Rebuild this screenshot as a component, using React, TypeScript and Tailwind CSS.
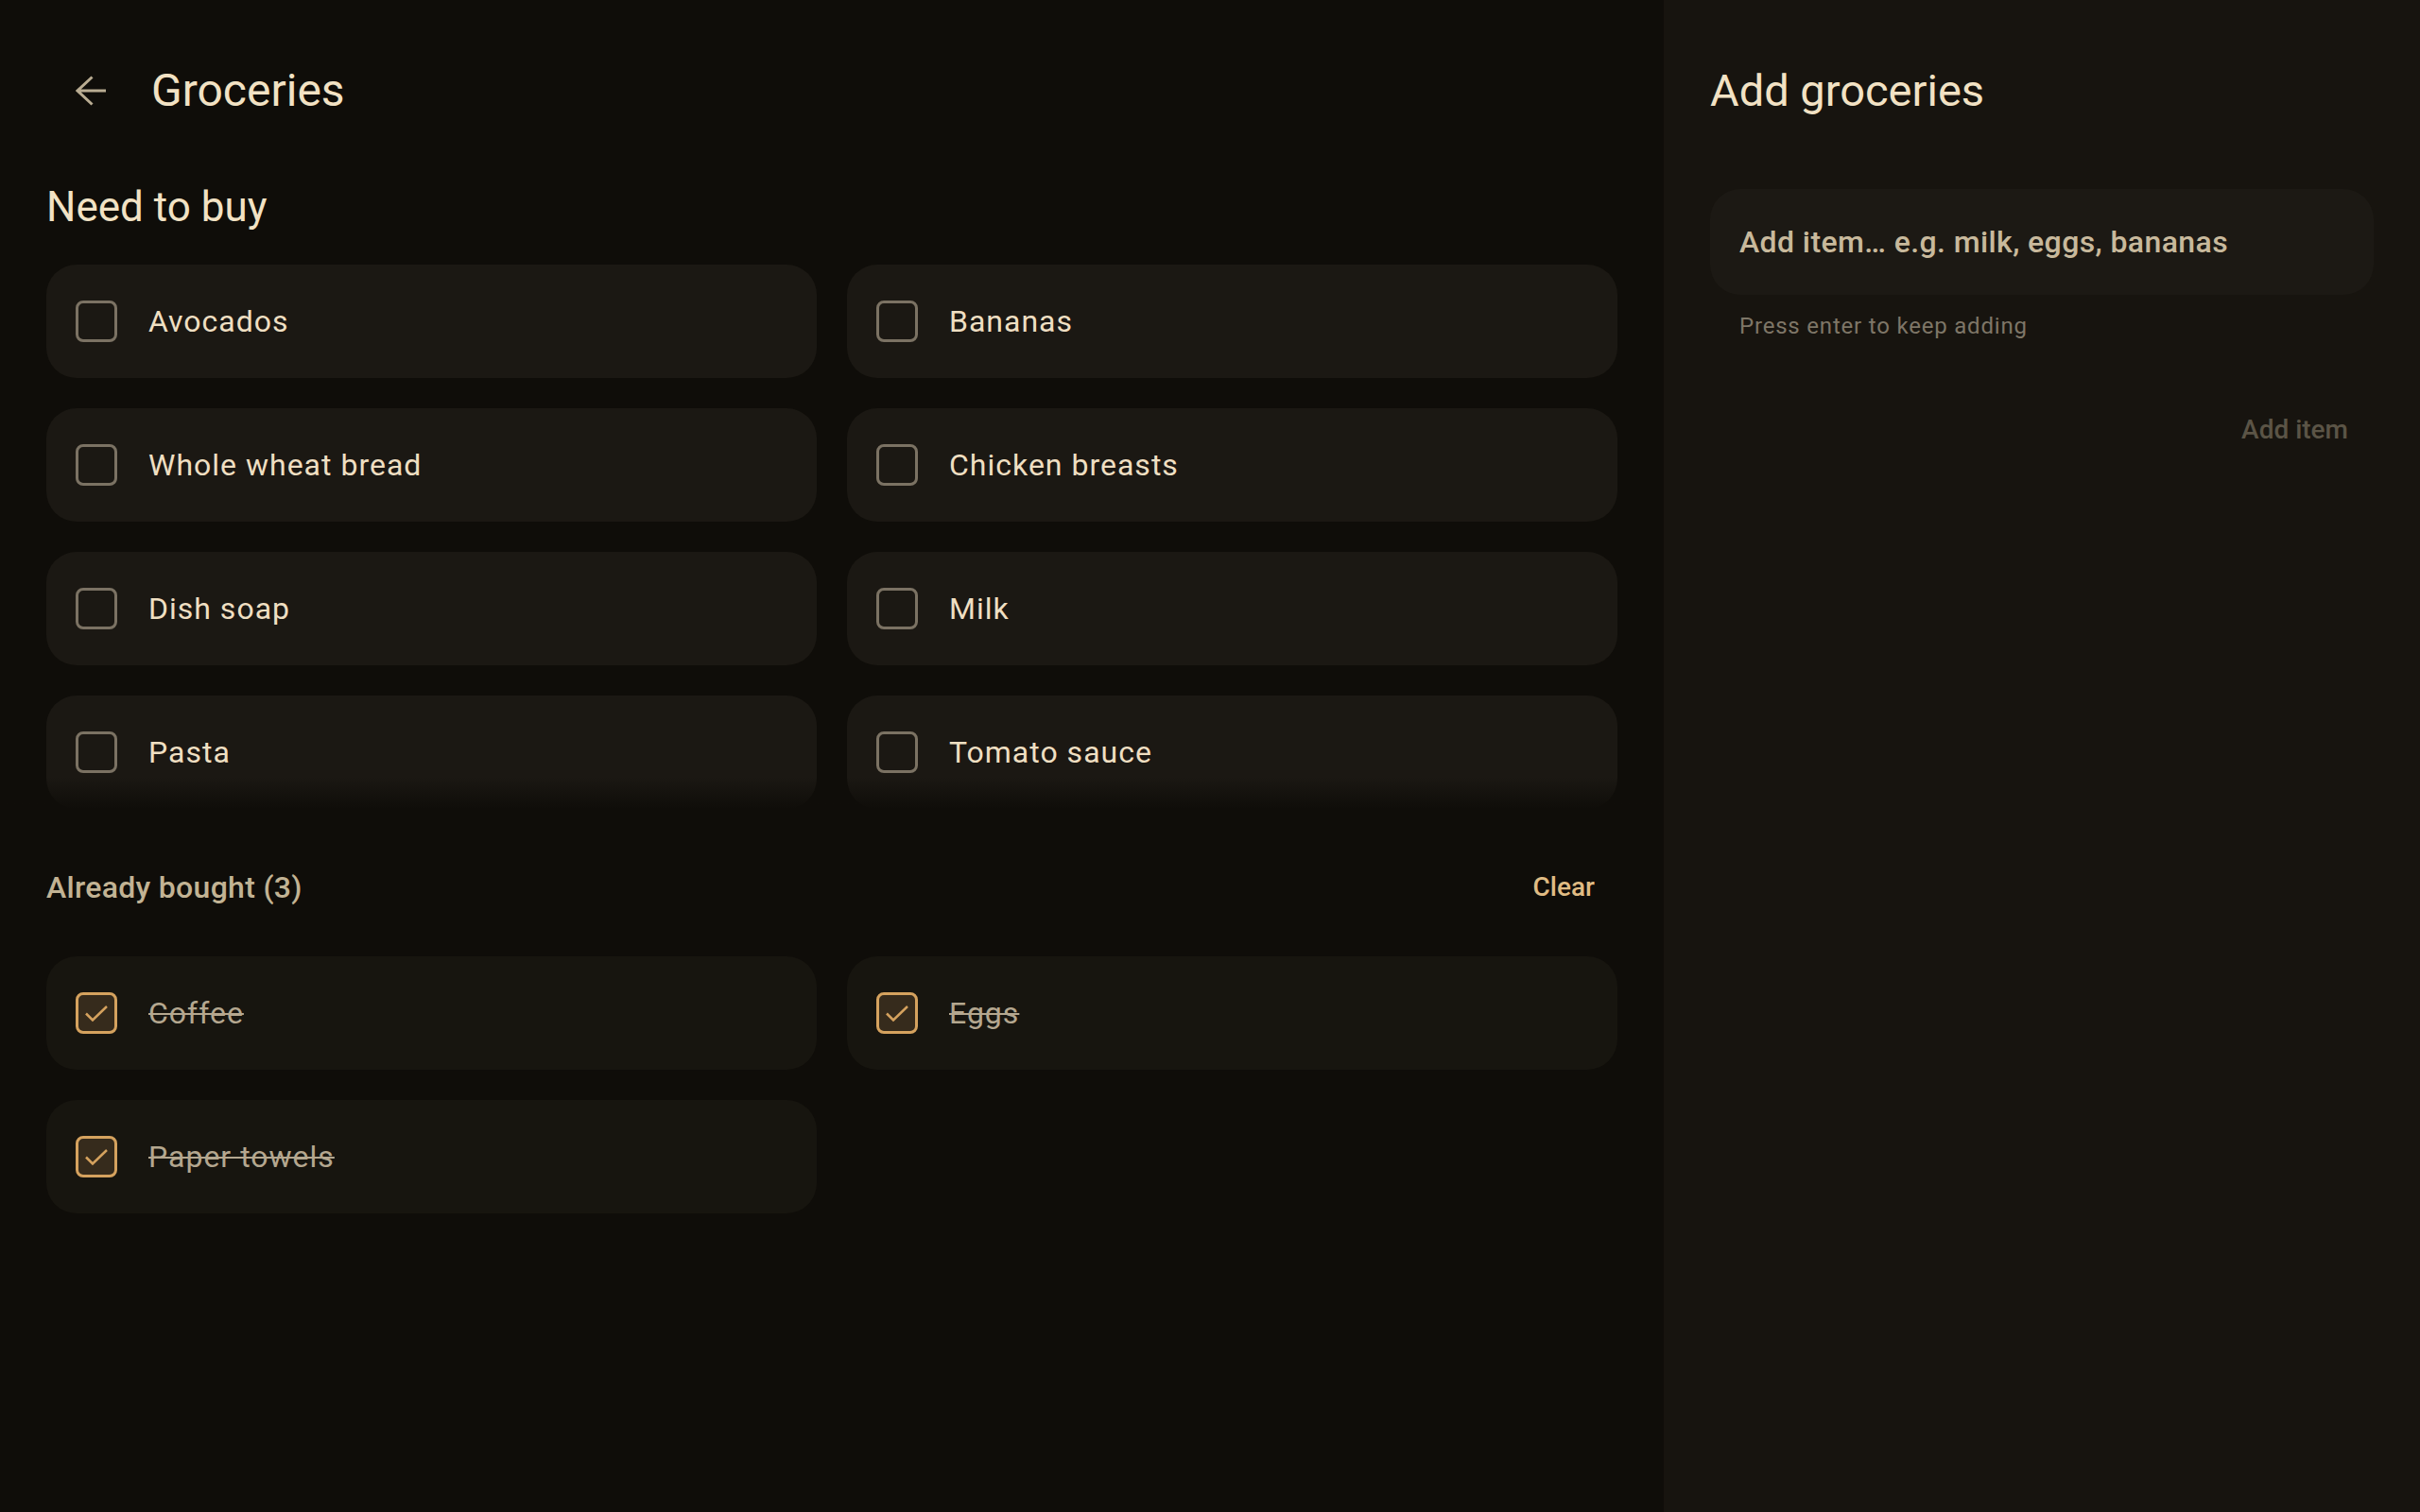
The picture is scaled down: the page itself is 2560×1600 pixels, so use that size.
const toBuy = [
  "Avocados",
  "Bananas",
  "Whole wheat bread",
  "Chicken breasts",
  "Dish soap",
  "Milk",
  "Pasta",
  "Tomato sauce",
];

const bought = ["Coffee", "Eggs", "Paper towels"];

function BackArrow() {
  return (
    <svg width="32" height="32" viewBox="0 0 32 32" fill="none">
      <path d="M2 16H32M17.5 1.5 2 16l15.5 14.5" stroke="#b9ac92" strokeWidth="3" />
    </svg>
  );
}

function Box({ checked }: { checked?: boolean }) {
  if (checked) {
    return (
      <div className="size-[44px] shrink-0 rounded-[8px] border-[3px] border-[#d5a25e] bg-[#362b1c] flex items-center justify-center">
        <svg width="44" height="44" viewBox="0 0 44 44" fill="none" className="-m-[3px]">
          <path d="M11 22.5 18 29.5 33 15" stroke="#d5a25e" strokeWidth="2.5" />
        </svg>
      </div>
    );
  }
  return <div className="size-[44px] shrink-0 rounded-[8px] border-[3px] border-[#7b7263]" />;
}

function Item({ name, done }: { name: string; done?: boolean }) {
  return (
    <div
      className={
        "h-[120px] rounded-[32px] px-[31px] flex items-center gap-[33px] " +
        (done ? "bg-[#17150f]" : "bg-[#1b1813]")
      }
    >
      <Box checked={done} />
      <span
        className={
          "text-[32px] tracking-[1px] " +
          (done ? "text-[#b4a78f] line-through decoration-[2px]" : "text-[#efdfc2]")
        }
      >
        {name}
      </span>
    </div>
  );
}

export default function App() {
  return (
    <div className="flex h-[1600px] w-[2560px] bg-[#0f0d09] font-['Roboto',sans-serif]">
      {/* list side */}
      <div className="w-[1760px] shrink-0 flex flex-col">
        <div className="h-[192px] flex items-center pl-[80px] gap-[48px]">
          <BackArrow />
          <h1 className="text-[48px] text-[#f2e2c4]">Groceries</h1>
        </div>

        <h2 className="h-[54px] flex items-center pl-[49px] text-[44px] text-[#f2e2c4]">Need to buy</h2>

        <div className="relative mt-[34px] px-[49px]">
          <div className="grid grid-cols-2 gap-[32px]">
            {toBuy.map((n) => (
              <Item key={n} name={n} />
            ))}
          </div>
          <div className="absolute left-0 right-0 bottom-0 h-[34px] bg-gradient-to-b from-transparent to-[#0f0d09]" />
        </div>

        <div className="mt-[51px] h-[64px] pl-[49px] pr-[49px] flex items-center justify-between">
          <span className="text-[32px] font-medium tracking-[0.3px] text-[#c2b394]">Already bought (3)</span>
          <button className="h-[64px] px-[24px] text-[28px] font-medium text-[#e0bc84]">Clear</button>
        </div>

        <div className="mt-[41px] px-[49px] grid grid-cols-2 gap-[32px]">
          {bought.map((n) => (
            <Item key={n} name={n} done />
          ))}
        </div>
      </div>

      {/* add panel */}
      <div className="flex-1 bg-[#17140f] px-[49px] flex flex-col">
        <div className="h-[192px] flex items-center">
          <h1 className="text-[47px] text-[#f2e2c4]">Add groceries</h1>
        </div>
        <div className="mt-[8px] h-[112px] rounded-[32px] bg-[#1c1914] px-[31px] flex items-center">
          <span className="text-[32px] font-medium tracking-[0.4px] text-[#c8b99c]">Add item… e.g. milk, eggs, bananas</span>
        </div>
        <p className="mt-[17px] pl-[31px] text-[24px] leading-[32px] tracking-[0.8px] text-[#7e7667]">
          Press enter to keep adding
        </p>
        <button className="mt-[54px] self-end h-[80px] px-[27px] text-[28px] font-medium text-[#5b5446]">Add item</button>
      </div>
    </div>
  );
}
